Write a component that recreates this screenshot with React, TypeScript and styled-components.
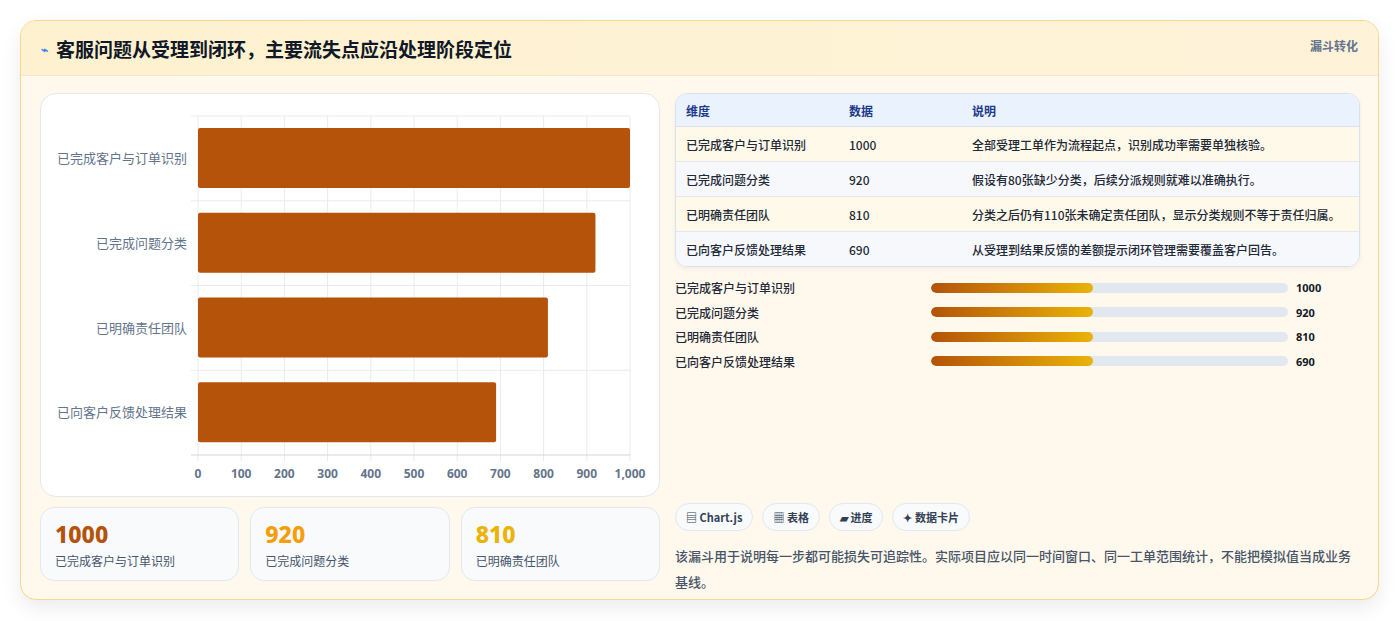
import React from "react";
import styled, { createGlobalStyle } from "styled-components";

const Global = createGlobalStyle`
  body { margin: 0; background: #fff; font-family: "Noto Sans CJK SC", "Noto Sans", sans-serif; }
`;

const rows = [
  { name: "已完成客户与订单识别", v: 1000, d: "全部受理工单作为流程起点，识别成功率需要单独核验。" },
  { name: "已完成问题分类", v: 920, d: "假设有80张缺少分类，后续分派规则就难以准确执行。" },
  { name: "已明确责任团队", v: 810, d: "分类之后仍有110张未确定责任团队，显示分类规则不等于责任归属。" },
  { name: "已向客户反馈处理结果", v: 690, d: "从受理到结果反馈的差额提示闭环管理需要覆盖客户回告。" },
];

const Page = styled.div`
  padding: 20px 20px 20px 20px;
  width: 1399px; box-sizing: border-box;
`;
const Card = styled.div`
  border: 1px solid #f4d98a; border-radius: 16px; background: #fff8ec;
  box-shadow: 0 8px 20px rgba(0,0,0,0.08); overflow: hidden; height: 580px; box-sizing: border-box;
`;
const Header = styled.div`
  height: 55px; box-sizing: border-box; display: flex; justify-content: space-between;
  padding: 0 20px 0 20px; background: linear-gradient(90deg, #fdf1cf, #fef3d9);
  border-bottom: 1px solid #f3e8cf;
`;
const Title = styled.h1`
  margin: 0; font-size: 19px; font-weight: 700; color: #111827; display: flex; align-items: center; gap: 8px;
  line-height: 55px;
`;
const Tag = styled.div`
  font-size: 12px; font-weight: 700; color: #64748b; padding-top: 16px;
`;
const Body = styled.div`
  display: grid; grid-template-columns: 620px 685px; gap: 15px; padding: 17px 19px 0 19px;
`;
const Col = styled.div` display: flex; flex-direction: column; `;
const ChartBox = styled.div`
  background: #fff; border: 1px solid #e5e7eb; border-radius: 16px; height: 404px; box-sizing: border-box;
`;
const Stats = styled.div` display: grid; grid-template-columns: repeat(3, 1fr); gap: 11px; margin-top: 10px; `;
const Stat = styled.div`
  background: #f8fafc; border: 1px solid #e2e8f0; border-radius: 14px; height: 74px; box-sizing: border-box;
  padding: 11px 14px;
`;
const StatNum = styled.div<{ c: string }>` font-size: 23px; font-weight: 800; color: ${p => p.c}; font-family: "Noto Sans", sans-serif; line-height: 30px; `;
const StatLbl = styled.div` font-size: 12px; color: #475569; margin-top: 3px; `;
const Table = styled.table`
  width: 100%; border-collapse: separate; border-spacing: 0; border: 1px solid #d9e2ec; border-radius: 12px;
  overflow: hidden; font-size: 12px; box-shadow: 0 2px 4px rgba(0,0,0,0.05);
`;
const Th = styled.th`
  background: #eaf3fd; color: #1e3a8a; text-align: left; font-weight: 700; height: 32px; padding: 0 10px;
  border-bottom: 1px solid #d9e2ec;
`;
const Td = styled.td<{ alt: boolean; last: boolean }>`
  background: ${p => (p.alt ? "#f6f8fb" : "#fef9e9")}; color: #1f2937; font-weight: 500; height: 34px; padding: 0 10px;
  border-bottom: ${p => (p.last ? "none" : "1px solid #e5e7eb")};
`;
const Progress = styled.div` display: flex; flex-direction: column; gap: 8px; margin-top: 12px; `;
const PRow = styled.div` display: grid; grid-template-columns: 256px 357px 1fr; align-items: center; font-size: 12px; height: 16.6px; `;
const PLabel = styled.div` color: #1f2937; font-weight: 500; `;
const Track = styled.div` height: 10px; background: #e2e8f0; border-radius: 5px; overflow: hidden; `;
const Fill = styled.div` height: 100%; border-radius: 5px; background: linear-gradient(90deg, #b45309, #eab308); `;
const PVal = styled.div` font-weight: 700; color: #111827; padding-left: 8px; font-family: "Noto Sans", sans-serif; font-size: 11px; `;
const Chips = styled.div` display: flex; gap: 9px; margin-top: 134px; `;
const Chip = styled.div`
  height: 28px; box-sizing: border-box; padding: 0 10px; border: 1px solid #e2e8f0; border-radius: 14px;
  background: #f8fafc; font-size: 11px; font-weight: 700; color: #334155; display: flex; align-items: center; gap: 3px;
`;
const Note = styled.p` margin: 12px 0 0; font-size: 13px; line-height: 26px; color: #475569; font-weight: 500; `;

function Chart() {
  const x0 = 157, w = 432, top = 22, band = 84.75;
  const ticks = [0,100,200,300,400,500,600,700,800,900,1000];
  return (
    <svg width="620" height="404" style={{ display: "block" }}>
      {ticks.map(t => (
        <line key={t} x1={x0 + (t/1000)*w} x2={x0 + (t/1000)*w} y1={top} y2={top + 4*band + 6} stroke="#e8ebf0" />
      ))}
      {[0,1,2,3,4].map(i => (
        <line key={i} x1={x0 - 7} x2={x0 + w} y1={top + i*band} y2={top + i*band} stroke={i === 4 ? "#d1d5db" : "#e8ebf0"} />
      ))}
      {rows.map((r, i) => (
        <g key={r.name}>
          <rect x={x0} y={top + i*band + 12} width={(r.v/1000)*w} height={60} rx={2} fill="#b45309" />
          <text x={x0 - 11} y={top + i*band + 47} textAnchor="end" fontSize="13" fill="#64748b" fontFamily="Noto Sans CJK SC, sans-serif">{r.name}</text>
        </g>
      ))}
      {ticks.map(t => (
        <text key={t} x={x0 + (t/1000)*w} y={384} textAnchor="middle" fontSize="12" fontWeight="700" fill="#64748b" fontFamily="Noto Sans, sans-serif">{t === 1000 ? "1,000" : t}</text>
      ))}
    </svg>
  );
}

export default function App() {
  return (
    <Page>
      <Global />
      <Card>
        <Header>
          <Title><span style={{ color: "#3b82f6", fontSize: 12 }}>⌁</span>客服问题从受理到闭环，主要流失点应沿处理阶段定位</Title>
          <Tag>漏斗转化</Tag>
        </Header>
        <Body>
          <Col>
            <ChartBox><Chart /></ChartBox>
            <Stats>
              <Stat><StatNum c="#b45309">1000</StatNum><StatLbl>已完成客户与订单识别</StatLbl></Stat>
              <Stat><StatNum c="#f59e0b">920</StatNum><StatLbl>已完成问题分类</StatLbl></Stat>
              <Stat><StatNum c="#eab308">810</StatNum><StatLbl>已明确责任团队</StatLbl></Stat>
            </Stats>
          </Col>
          <Col>
            <Table>
              <thead><tr><Th style={{ width: 143 }}>维度</Th><Th style={{ width: 103 }}>数据</Th><Th>说明</Th></tr></thead>
              <tbody>
                {rows.map((r, i) => (
                  <tr key={r.name}>
                    <Td alt={i % 2 === 1} last={i === 3}>{r.name}</Td>
                    <Td alt={i % 2 === 1} last={i === 3}>{r.v}</Td>
                    <Td alt={i % 2 === 1} last={i === 3}>{r.d}</Td>
                  </tr>
                ))}
              </tbody>
            </Table>
            <Progress>
              {rows.map(r => (
                <PRow key={r.name}>
                  <PLabel>{r.name}</PLabel>
                  <Track><Fill style={{ width: "45.5%" }} /></Track>
                  <PVal>{r.v}</PVal>
                </PRow>
              ))}
            </Progress>
            <Chips>
              <Chip>▤ Chart.js</Chip><Chip>▦ 表格</Chip><Chip>▰ 进度</Chip><Chip>✦ 数据卡片</Chip>
            </Chips>
            <Note>该漏斗用于说明每一步都可能损失可追踪性。实际项目应以同一时间窗口、同一工单范围统计，不能把模拟值当成业务基线。</Note>
          </Col>
        </Body>
      </Card>
    </Page>
  );
}
